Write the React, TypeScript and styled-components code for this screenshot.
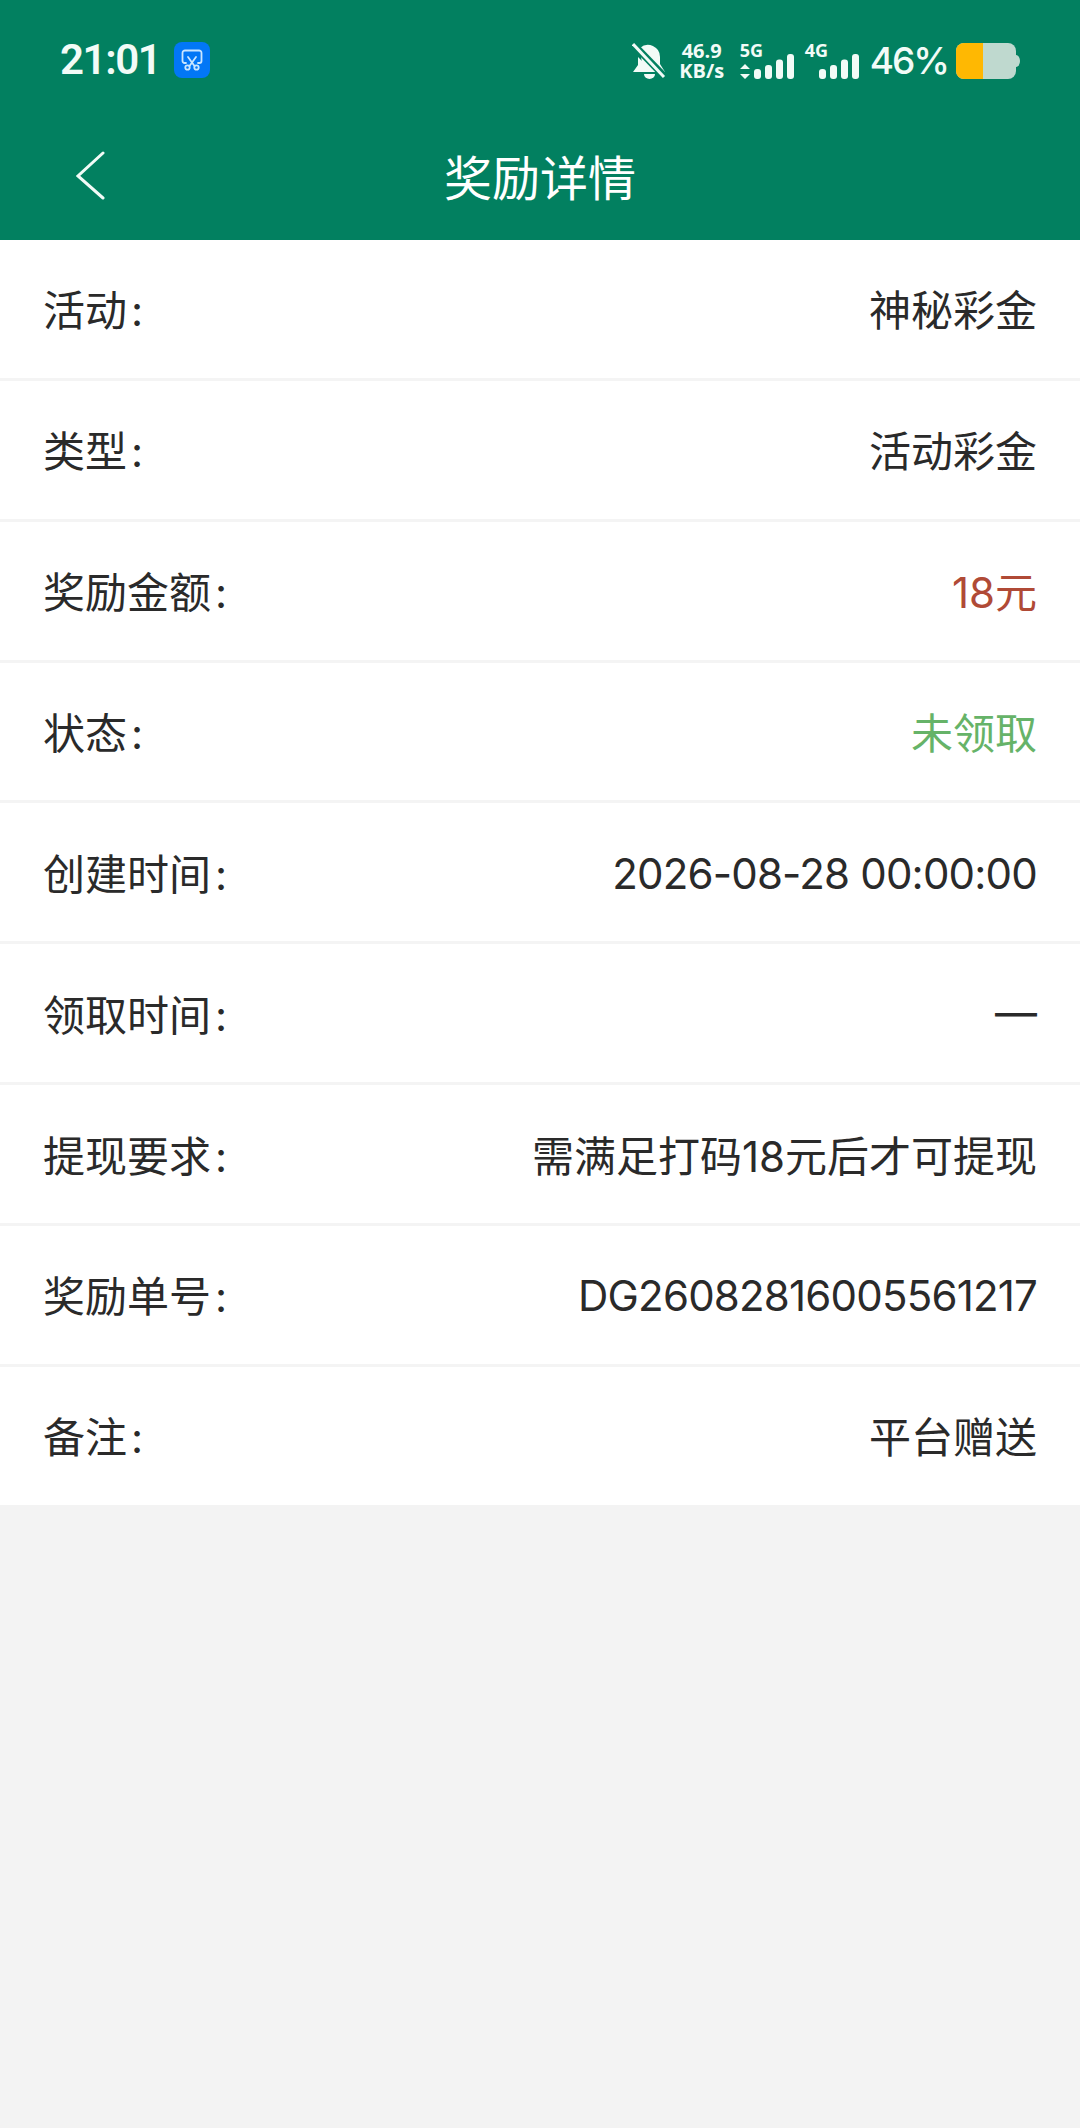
import React from 'react';
import styled, { createGlobalStyle } from 'styled-components';

const GlobalStyle = createGlobalStyle`
  html, body {
    margin: 0;
    padding: 0;
    background: #f3f3f3;
  }
`;

const Page = styled.div`
  width: 1080px;
  height: 2128px;
  overflow: hidden;
  background: #f3f3f3;
  font-family: Inter, "Noto Sans CJK SC", sans-serif;
`;

const Header = styled.header`
  height: 240px;
  background: #028060;
  color: #f2fbf7;
  display: flex;
  flex-direction: column;
`;

const StatusBar = styled.div`
  height: 122px;
  padding: 0 60px 0 60px;
  display: flex;
  align-items: center;
  box-sizing: border-box;
`;

const Clock = styled.span`
  font-family: Roboto, sans-serif;
  font-size: 42px;
  font-weight: 600;
  letter-spacing: -1.4px;
  width: 114px;
`;

const ShotBadge = styled.span`
  width: 36px;
  height: 36px;
  border-radius: 8px;
  background: #0277f6;
  display: flex;
  align-items: center;
  justify-content: center;
`;

const StatusRight = styled.div`
  margin: 2px 0 0 auto;
  display: flex;
  align-items: center;
`;

const Speed = styled.div`
  font-family: "Open Sans", sans-serif;
  font-weight: 700;
  font-size: 20px;
  line-height: 20px;
  text-align: center;
  width: 46px;
  margin: 0 15px 0 13px;
`;

const SignalBox = styled.div`
  position: relative;
  width: 54px;
  height: 36px;
  margin-right: 11px;
  display: flex;
`;

const SignalLabel = styled.span`
  position: absolute;
  left: 0;
  top: -4px;
  font-family: "Open Sans", sans-serif;
  font-weight: 700;
  font-size: 18px;
  line-height: 22px;
`;

const Percent = styled.span`
  font-size: 37px;
  font-weight: 500;
  letter-spacing: -2px;
  margin: 0 8px 0 0;
`;

const NavBar = styled.div`
  height: 112px;
  display: grid;
  grid-template-columns: 1fr auto 1fr;
  align-items: center;
  padding: 0 60px 10px 76px;
`;

const Title = styled.h1`
  margin: 0;
  font-size: 48px;
  font-weight: 400;
  color: #fff;
  transform: translateX(-8px);
`;

const List = styled.main`
  background: #fff;
`;

const Row = styled.div`
  box-sizing: border-box;
  height: 140.86px;
  padding: 0 43px 2px;
  display: flex;
  justify-content: space-between;
  align-items: center;
  font-size: 42px;
  color: #2a2a2a;
  border-bottom: 3px solid #f4f4f4;

  &:last-child {
    height: 138px;
    border-bottom: none;
  }
`;

const Colon = styled.span`
  margin-left: 4px;
`;

const Value = styled.span<{ $tone?: string; $latin?: boolean }>`
  color: ${({ $tone }) => $tone ?? '#2a2a2a'};
  ${({ $latin }) => $latin && 'letter-spacing: -0.8px; margin-top: 4px;'}
`;

const rows: { label: string; value: string; tone?: string; latin?: boolean }[] = [
  { label: '活动', value: '神秘彩金' },
  { label: '类型', value: '活动彩金' },
  { label: '奖励金额', value: '18元', tone: '#b04a36' },
  { label: '状态', value: '未领取', tone: '#66b368' },
  { label: '创建时间', value: '2026-08-28 00:00:00', latin: true },
  { label: '领取时间', value: '—' },
  { label: '提现要求', value: '需满足打码18元后才可提现' },
  { label: '奖励单号', value: 'DG26082816005561217', latin: true },
  { label: '备注', value: '平台赠送' },
];

const Signal = ({ label, arrows }: { label: string; arrows?: boolean }) => (
  <SignalBox>
    <SignalLabel>{label}</SignalLabel>
    <svg width="54" height="36" viewBox="0 0 54 36" fill="#f2fbf7">
      {arrows && <path d="M5 21l5 5H0zM5 36l5-5H0z" />}
      <rect x="14" y="26" width="7" height="10" rx="3" />
      <rect x="25" y="22" width="7" height="14" rx="3" />
      <rect x="36" y="16.5" width="7" height="19.5" rx="3" />
      <rect x="47" y="11" width="7" height="25" rx="3" />
    </svg>
  </SignalBox>
);

export default function App() {
  return (
    <Page>
      <GlobalStyle />
      <Header>
        <StatusBar>
          <Clock>21:01</Clock>
          <ShotBadge>
            <svg width="24" height="24" viewBox="0 0 24 24" fill="none" stroke="#c9e6ff" strokeWidth="1.8" strokeLinecap="round">
              <path d="M6 15 H4.5 A2 2 0 0 1 2.5 13 V5 A2.5 2.5 0 0 1 5 2.5 H19 A2.5 2.5 0 0 1 21.5 5 V13 A2 2 0 0 1 19.5 15 H18" />
              <path d="M8 9l6.5 9M16 9l-6.5 9" />
              <circle cx="7.5" cy="19.5" r="2.2" />
              <circle cx="16.5" cy="19.5" r="2.2" />
            </svg>
          </ShotBadge>
          <StatusRight>
            <svg width="34" height="36" viewBox="0 0 34 36" fill="#f2fbf7">
              <path d="M8 5 A12 12 0 0 1 28 14 V21 L33 29 H11 Z" />
              <path d="M6 14 L21 29 H1 L6 22 Z" />
              <path d="M12 31 H23 A5.5 5 0 0 1 12 31 Z" />
              <path d="M2 2 L32 33" stroke="#028060" strokeWidth="7" />
              <path d="M1 1 L32 34" stroke="#f2fbf7" strokeWidth="3" />
            </svg>
            <Speed>
              46.9
              <br />
              KB/s
            </Speed>
            <Signal label="5G" arrows />
            <Signal label="4G" />
            <Percent>46%</Percent>
            <svg width="64" height="36" viewBox="0 0 64 36">
              <rect x="0" y="0" width="60" height="36" rx="8" fill="#bfd9cf" />
              <path d="M8 0 H27 V36 H8 A8 8 0 0 1 0 28 V8 A8 8 0 0 1 8 0 Z" fill="#ffb802" />
              <path d="M60 12 A4 6 0 0 1 60 24 Z" fill="#bfd9cf" />
            </svg>
          </StatusRight>
        </StatusBar>
        <NavBar>
          <svg width="30" height="50" viewBox="0 0 30 50" fill="none" stroke="#f2fbf7" strokeWidth="3" strokeLinecap="round">
            <path d="M27 3 L2 26 L27 48" />
          </svg>
          <Title>奖励详情</Title>
        </NavBar>
      </Header>
      <List>
        {rows.map((row) => (
          <Row key={row.label}>
            <span>
              {row.label}
              <Colon>:</Colon>
            </span>
            <Value $tone={row.tone} $latin={row.latin}>{row.value}</Value>
          </Row>
        ))}
      </List>
    </Page>
  );
}
